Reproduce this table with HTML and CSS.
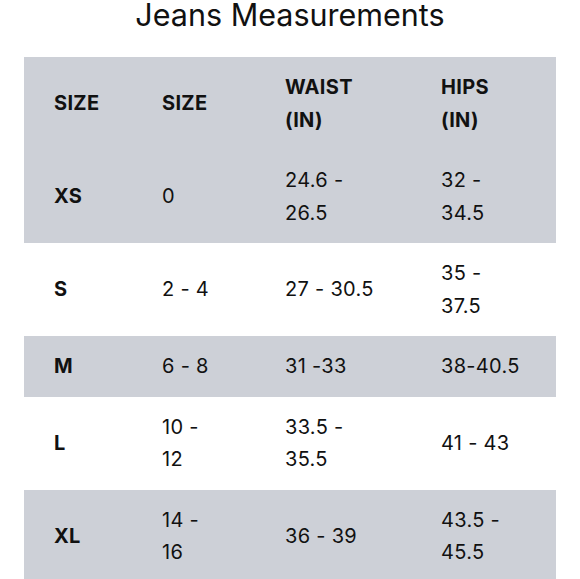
FILE: index.html
```html
<!DOCTYPE html>
<html lang="en">
<head>
<meta charset="utf-8">
<title>Jeans Measurements</title>
<link rel="stylesheet" href="styles.css">
</head>
<body>
<h1 class="title">Jeans Measurements</h1>
<table class="chart">
  <colgroup>
    <col class="c1"><col class="c2"><col class="c3"><col class="c4">
  </colgroup>
  <thead>
    <tr class="shade">
      <th>SIZE</th><th>SIZE</th><th>WAIST<br>(IN)</th><th>HIPS<br>(IN)</th>
    </tr>
  </thead>
  <tbody>
    <tr class="shade"><th>XS</th><td>0</td><td>24.6 -<br>26.5</td><td>32 -<br>34.5</td></tr>
    <tr><th>S</th><td>2 - 4</td><td>27 - 30.5</td><td>35 -<br>37.5</td></tr>
    <tr class="shade"><th>M</th><td>6 - 8</td><td>31 -33</td><td>38-40.5</td></tr>
    <tr><th>L</th><td>10 -<br>12</td><td>33.5 -<br>35.5</td><td>41 - 43</td></tr>
    <tr class="shade"><th>XL</th><td>14 -<br>16</td><td>36 - 39</td><td>43.5 -<br>45.5</td></tr>
  </tbody>
</table>
</body>
</html>
```
FILE: styles.css
```css
html, body {
  margin: 0;
  padding: 0;
  background: #ffffff;
}
body {
  font-family: Inter, "Noto Sans", sans-serif;
  color: #111111;
  overflow: hidden;
}
.title {
  margin: 0 0 27px 0;
  font-size: 30.5px;
  line-height: 30px;
  font-weight: 400;
  text-align: center;
  color: #111111;
}
.chart {
  margin-left: 24px;
  width: 532px;
  border-collapse: collapse;
  table-layout: fixed;
  font-size: 20px;
  line-height: 32.5px;
  letter-spacing: 0.3px;
}
.c1 { width: 138px; }
.c2 { width: 123px; }
.c3 { width: 156px; }
.c4 { width: 115px; }
.chart th, .chart td {
  padding: 14px 0;
  text-align: left;
  vertical-align: middle;
}
.chart th:first-child { padding-left: 30px; }
.chart td { font-weight: 400; }
.chart th { font-weight: 700; }
.shade { background: #cdd0d7; }
```
